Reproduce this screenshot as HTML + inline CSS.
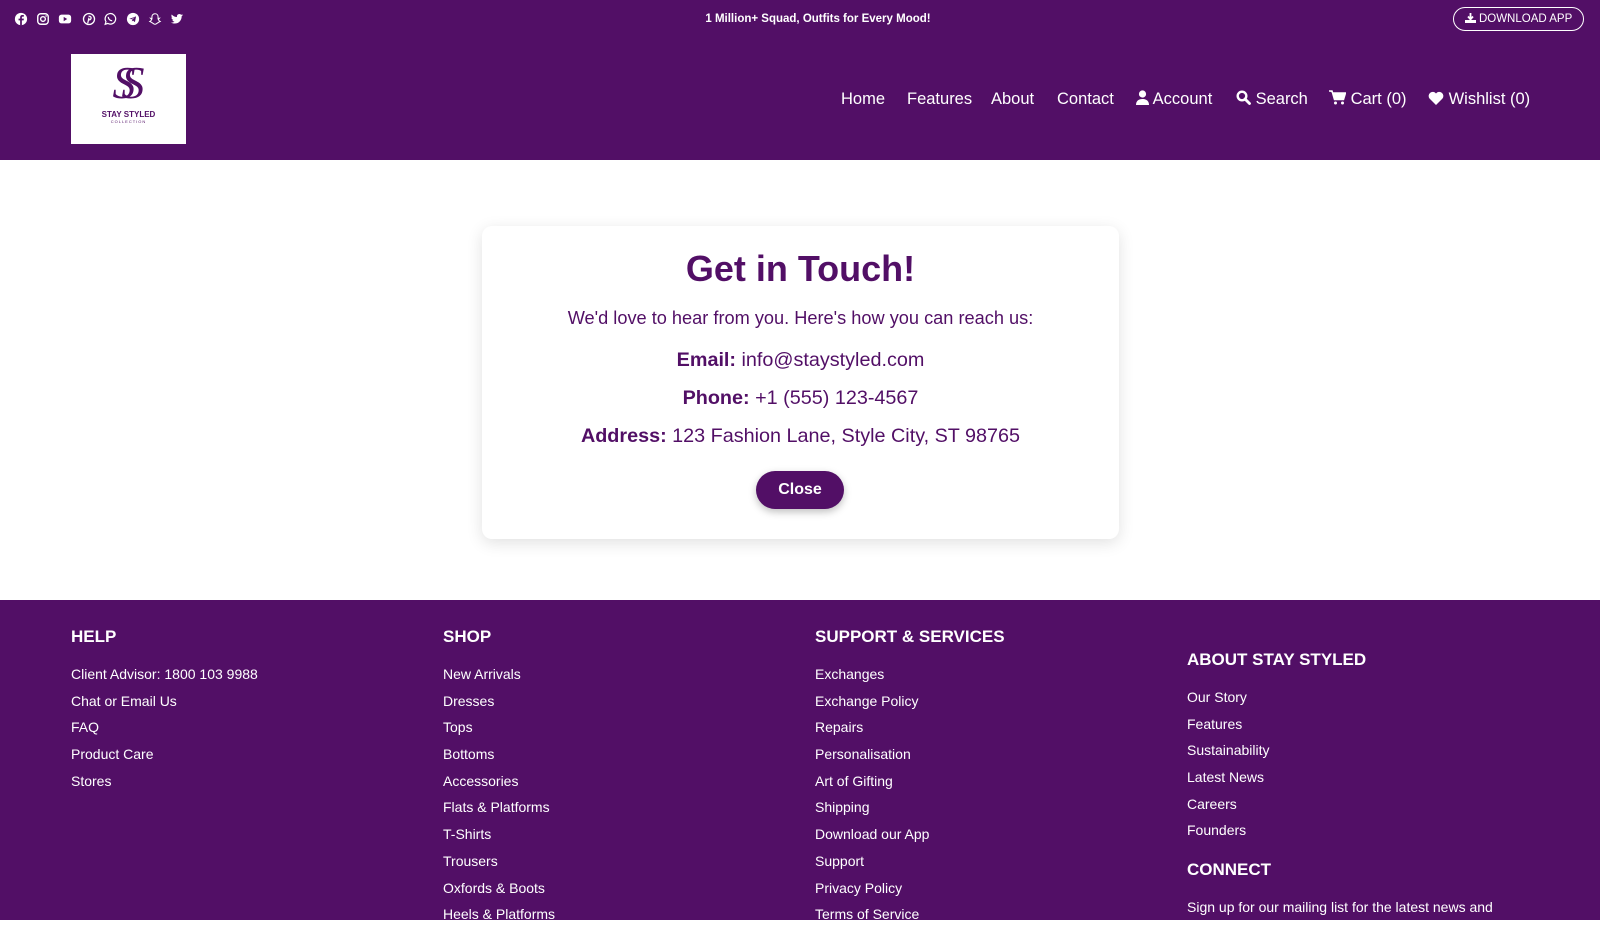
<!DOCTYPE html>
<html><head><meta charset="utf-8"><style>
*{margin:0;padding:0;box-sizing:border-box}
body{width:1600px;height:909px;overflow:hidden;background:#fff;font-family:"Liberation Sans",Arial,sans-serif;position:relative}
.top{position:absolute;left:0;top:0;width:1600px;height:160px;background:#520f66;color:#fff}
.ic{position:absolute;top:12px;width:14px;height:14px}
.tag{position:absolute;top:13px;left:0;width:1636px;text-align:center;font-size:11.5px;font-weight:bold}
.dl{position:absolute;left:1453px;top:7px;width:131px;height:24px;border:1px solid #fff;border-radius:12px;font-size:11.5px;line-height:23px;text-align:center}
.logo{position:absolute;left:71px;top:54px;width:115px;height:90px;background:#fff;text-align:center;color:#520f66}
.nav{position:absolute;top:90px;font-size:16.5px;white-space:nowrap}
.card{position:absolute;left:482px;top:226px;width:637px;height:313px;background:#fff;border-radius:10px;box-shadow:0 4px 16px rgba(0,0,0,.12);text-align:center;color:#520f66}
.card h1{position:absolute;top:22px;width:100%;font-size:36px}
.card p{position:absolute;width:100%;font-size:19.8px}
.card b{font-weight:bold}
.btn{position:absolute;left:274px;top:245px;width:88px;height:38px;border-radius:19px;background:#520f66;color:#fff;font-weight:bold;font-size:16px;line-height:38px;box-shadow:0 3px 8px rgba(0,0,0,.25)}
.foot{position:absolute;left:0;top:600px;width:1600px;height:320px;background:#520f66;color:#fff}
.col{position:absolute}
.col h3{font-size:17px;font-weight:bold;height:39px;line-height:20px}
.col div{font-size:14px;height:26.7px}
</style></head><body>
<div class="top">
<svg class="ic" style="left:14px" viewBox="0 0 16 16"><circle cx="8" cy="8" r="7" fill="#fff"/><path d="M9 15V9.5h2l.3-2H9V6.3c0-.6.2-1 1-1h1.3V3.5c-.3 0-1-.1-1.8-.1C7.9 3.4 7 4.4 7 6v1.5H5.2v2H7V15" fill="#520f66"/></svg>
<svg class="ic" style="left:36px" viewBox="0 0 16 16"><rect x="2" y="2" width="12" height="12" rx="3.5" fill="none" stroke="#fff" stroke-width="1.6"/><circle cx="8" cy="8" r="2.7" fill="none" stroke="#fff" stroke-width="1.6"/><circle cx="11.5" cy="4.5" r=".9" fill="#fff"/></svg>
<svg class="ic" style="left:58px" viewBox="0 0 16 16"><rect x="1" y="3" width="14" height="10" rx="3" fill="#fff"/><path d="M6.5 5.5v5l4-2.5z" fill="#520f66"/></svg>
<svg class="ic" style="left:82px" viewBox="0 0 16 16"><circle cx="8" cy="8" r="6.3" fill="none" stroke="#fff" stroke-width="1.5"/><path d="M7.5 5c2.5-.5 3.5 1.5 2.5 3s-2.5 1-2.5 0M8 6.5 6.5 13" stroke="#fff" stroke-width="1.4" fill="none"/></svg>
<svg class="ic" style="left:103px" viewBox="0 0 16 16"><path d="M2.5 14l.9-3A6 6 0 1 1 5.5 13z" fill="none" stroke="#fff" stroke-width="1.4"/><path d="M6 5.5c0 2.5 2 4.5 4.5 4.5" stroke="#fff" stroke-width="1.4" fill="none"/></svg>
<svg class="ic" style="left:126px" viewBox="0 0 16 16"><circle cx="8" cy="8" r="7" fill="#fff"/><path d="M3.8 7.8 11.5 5l-1.3 6.5-2.3-1.8-1.2 1.1.2-2 3.3-3-4 2.5z" fill="#520f66"/></svg>
<svg class="ic" style="left:148px" viewBox="0 0 16 16"><path d="M8 2c2.3 0 3.5 1.7 3.5 3.5v2l1.5-.3-1.2 1.3c.5 1.3 1.5 2 2.2 2.3-.9.6-2 .5-2.4 1.4C10.5 12.5 9.3 14 8 14s-2.5-1.5-3.6-1.8C4 11.3 2.9 11.4 2 10.8c.7-.3 1.7-1 2.2-2.3L3 7.2l1.5.3v-2C4.5 3.7 5.7 2 8 2z" fill="none" stroke="#fff" stroke-width="1.2"/></svg>
<svg class="ic" style="left:170px" viewBox="0 0 16 16"><path d="M15 3.5c-.5.3-1 .4-1.6.5.6-.4 1-.9 1.2-1.5-.5.3-1.1.5-1.8.7A2.8 2.8 0 0 0 8 5.7 8 8 0 0 1 2 2.8c-.8 1.3-.3 3 .9 3.8-.5 0-.9-.2-1.3-.4 0 1.4 1 2.5 2.3 2.8-.4.1-.9.1-1.300 0 .4 1.1 1.4 1.9 2.6 2A5.7 5.7 0 0 1 1 12c1.3.8 2.7 1.2 4.3 1.2 5.2 0 8.2-4.4 8-8.4.7-.4 1.2-.8 1.7-1.3z" fill="#fff"/></svg>
<div class="tag">1 Million+ Squad, Outfits for Every Mood!</div>
<div class="dl"><svg width="11" height="10" viewBox="0 0 11 10" style="vertical-align:-1px"><path d="M5.5 0v6M3 3.5l2.5 2.8L8 3.5" stroke="#fff" stroke-width="1.8" fill="none"/><rect x="0" y="7" width="11" height="3" fill="#fff"/></svg> DOWNLOAD APP</div>
<div class="logo">
<div style="font-family:'Liberation Serif',serif;font-style:italic;font-size:46px;line-height:50px;margin-top:4px;letter-spacing:-14px;padding-right:14px">SS</div>
<div style="font-size:8px;font-weight:bold;margin-top:2px">STAY STYLED</div>
<div style="font-size:4px;letter-spacing:1px">COLLECTION</div>
</div>
<div class="nav" style="left:841px">Home</div>
<div class="nav" style="left:907px">Features</div>
<div class="nav" style="left:991px">About</div>
<div class="nav" style="left:1057px">Contact</div>
<div class="nav" style="left:1136px"><svg width="13" height="15" viewBox="0 0 13 15" style="vertical-align:-1px"><circle cx="6.5" cy="4" r="3.6" fill="#fff"/><path d="M0 15c0-4 2.5-6 6.5-6s6.5 2 6.5 6z" fill="#fff"/></svg> Account</div>
<div class="nav" style="left:1236px"><svg width="15" height="15" viewBox="0 0 15 15" style="vertical-align:-1px"><circle cx="6" cy="6" r="4.3" fill="none" stroke="#fff" stroke-width="2.4"/><path d="M9 9l4.5 4.5" stroke="#fff" stroke-width="2.8" stroke-linecap="round"/></svg> Search</div>
<div class="nav" style="left:1329px"><svg width="17" height="15" viewBox="0 0 17 15" style="vertical-align:-1px"><path d="M0 1h3l2.5 8.5h9L16.5 3H4" fill="#fff" stroke="#fff" stroke-width="1.5"/><circle cx="6.5" cy="13" r="1.5" fill="#fff"/><circle cx="13.5" cy="13" r="1.5" fill="#fff"/></svg> Cart (0)</div>
<div class="nav" style="left:1428px"><svg width="16" height="14" viewBox="0 0 16 14" style="vertical-align:-1px"><path d="M8 14 1.5 7.5A4 4 0 0 1 8 2.5a4 4 0 0 1 6.5 5z" fill="#fff"/></svg> Wishlist (0)</div>
</div>
<div class="card">
<h1>Get in Touch!</h1>
<p style="top:82px;font-size:18.2px">We'd love to hear from you. Here's how you can reach us:</p>
<p style="top:123px"><b>Email:</b> info@staystyled.com</p>
<p style="top:161px"><b>Phone:</b> +1 (555) 123-4567</p>
<p style="top:199px"><b>Address:</b> 123 Fashion Lane, Style City, ST 98765</p>
<div class="btn">Close</div>
</div>
<div class="foot">
<div class="col" style="left:71px;top:27px"><h3>HELP</h3><div>Client Advisor: 1800 103 9988</div><div>Chat or Email Us</div><div>FAQ</div><div>Product Care</div><div>Stores</div></div>
<div class="col" style="left:443px;top:27px"><h3>SHOP</h3><div>New Arrivals</div><div>Dresses</div><div>Tops</div><div>Bottoms</div><div>Accessories</div><div>Flats &amp; Platforms</div><div>T-Shirts</div><div>Trousers</div><div>Oxfords &amp; Boots</div><div>Heels &amp; Platforms</div></div>
<div class="col" style="left:815px;top:27px"><h3>SUPPORT &amp; SERVICES</h3><div>Exchanges</div><div>Exchange Policy</div><div>Repairs</div><div>Personalisation</div><div>Art of Gifting</div><div>Shipping</div><div>Download our App</div><div>Support</div><div>Privacy Policy</div><div>Terms of Service</div></div>
<div class="col" style="left:1187px;top:50px"><h3>ABOUT STAY STYLED</h3><div>Our Story</div><div>Features</div><div>Sustainability</div><div>Latest News</div><div>Careers</div><div>Founders</div><h3 style="margin-top:11px">CONNECT</h3><div>Sign up for our mailing list for the latest news and</div></div>
</div>
</body></html>
